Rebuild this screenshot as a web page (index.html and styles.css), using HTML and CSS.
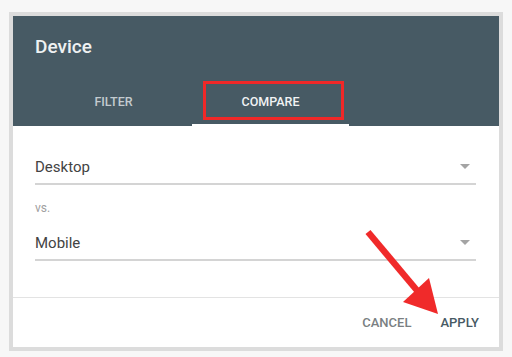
FILE: index.html
```html
<!DOCTYPE html>
<html lang="en">
<head>
    <meta charset="UTF-8">
    <meta name="viewport" content="width=device-width, initial-scale=1.0">
    <title>Device</title>
    <link rel="stylesheet" href="styles.css">
</head>
<body>
    <div class="dialog">
        <div class="dialog-header">
            <div class="dialog-title">Device</div>
            <div class="tabs">
                <div class="tab">FILTER</div>
                <div class="tab active">COMPARE</div>
            </div>
        </div>
        <div class="dialog-body">
            <div class="field field-first">
                <span>Desktop</span>
                <span class="caret"></span>
            </div>
            <div class="vs">vs.</div>
            <div class="field field-second">
                <span>Mobile</span>
                <span class="caret"></span>
            </div>
        </div>
        <div class="dialog-footer">
            <div class="btn">CANCEL</div>
            <div class="btn btn-primary">APPLY</div>
        </div>
        <!-- annotation -->
        <div class="highlight"></div>
    </div>
    <svg class="arrow" width="512" height="357" viewBox="0 0 512 357">
        <line x1="368" y1="232" x2="420" y2="294" stroke="#f02a2a" stroke-width="6.5"/>
        <polygon points="438,314 403,302 429,278" fill="#f02a2a"/>
    </svg>
</body>
</html>
```

FILE: styles.css
```css
html, body { margin: 0; padding: 0; }
body { background-color: #f7f7f7; font-family: Roboto, "Liberation Sans", Arial, sans-serif; width: 512px; height: 357px; overflow: hidden; }

.dialog {
position: relative;
width: 486px;
height: 331px;
margin: 12px 0 0 9px;
border: 4px solid #dcdcdc;
background-color: #fff;
display: flex;
flex-direction: column;
}

/* 헤더 */
.dialog-header { height: 110px; background-color: #475a64; display: flex; flex-direction: column; }
.dialog-title { padding: 19px 22px 0; line-height: 24px; font-size: 19px; font-weight: 500; color: #eef1f2; }
.tabs { margin-top: auto; display: flex; padding-left: 22px; }
.tab { width: 157px; height: 46px; border-bottom: 2px solid transparent; display: flex; align-items: center; justify-content: center; font-size: 12.5px; font-weight: 500; color: #c3cbcf; }
.tab.active { border-bottom-color: #fff; color: #f1f3f4; }

/* 본문 */
.dialog-body { flex: 1; padding: 0 23px 0 22px; }
.field { height: 33px; border-bottom: 2px solid #d4d4d4; display: flex; align-items: center; justify-content: space-between; font-size: 15px; color: #434343; }
.field-first { margin-top: 24px; }
.field-second { margin-top: 8px; }
.caret { width: 0; height: 0; margin-right: 6px; border-left: 5px solid transparent; border-right: 5px solid transparent; border-top: 5px solid #a4a4a4; }
.vs { margin-top: 13px; height: 20px; line-height: 20px; font-size: 12px; color: #a0a0a0; }

/* 하단 버튼 */
.dialog-footer { height: 49px; border-top: 1px solid #e3e3e3; display: flex; align-items: center; justify-content: flex-end; gap: 29px; padding-right: 20px; }
.btn { font-size: 13px; font-weight: 500; color: #7a7f82; }
.btn-primary { color: #475a64; }

.highlight { position: absolute; left: 190px; top: 65px; width: 135px; height: 33px; border: 3px solid #f02828; }
.arrow { position: absolute; left: 0; top: 0; pointer-events: none; }
```
